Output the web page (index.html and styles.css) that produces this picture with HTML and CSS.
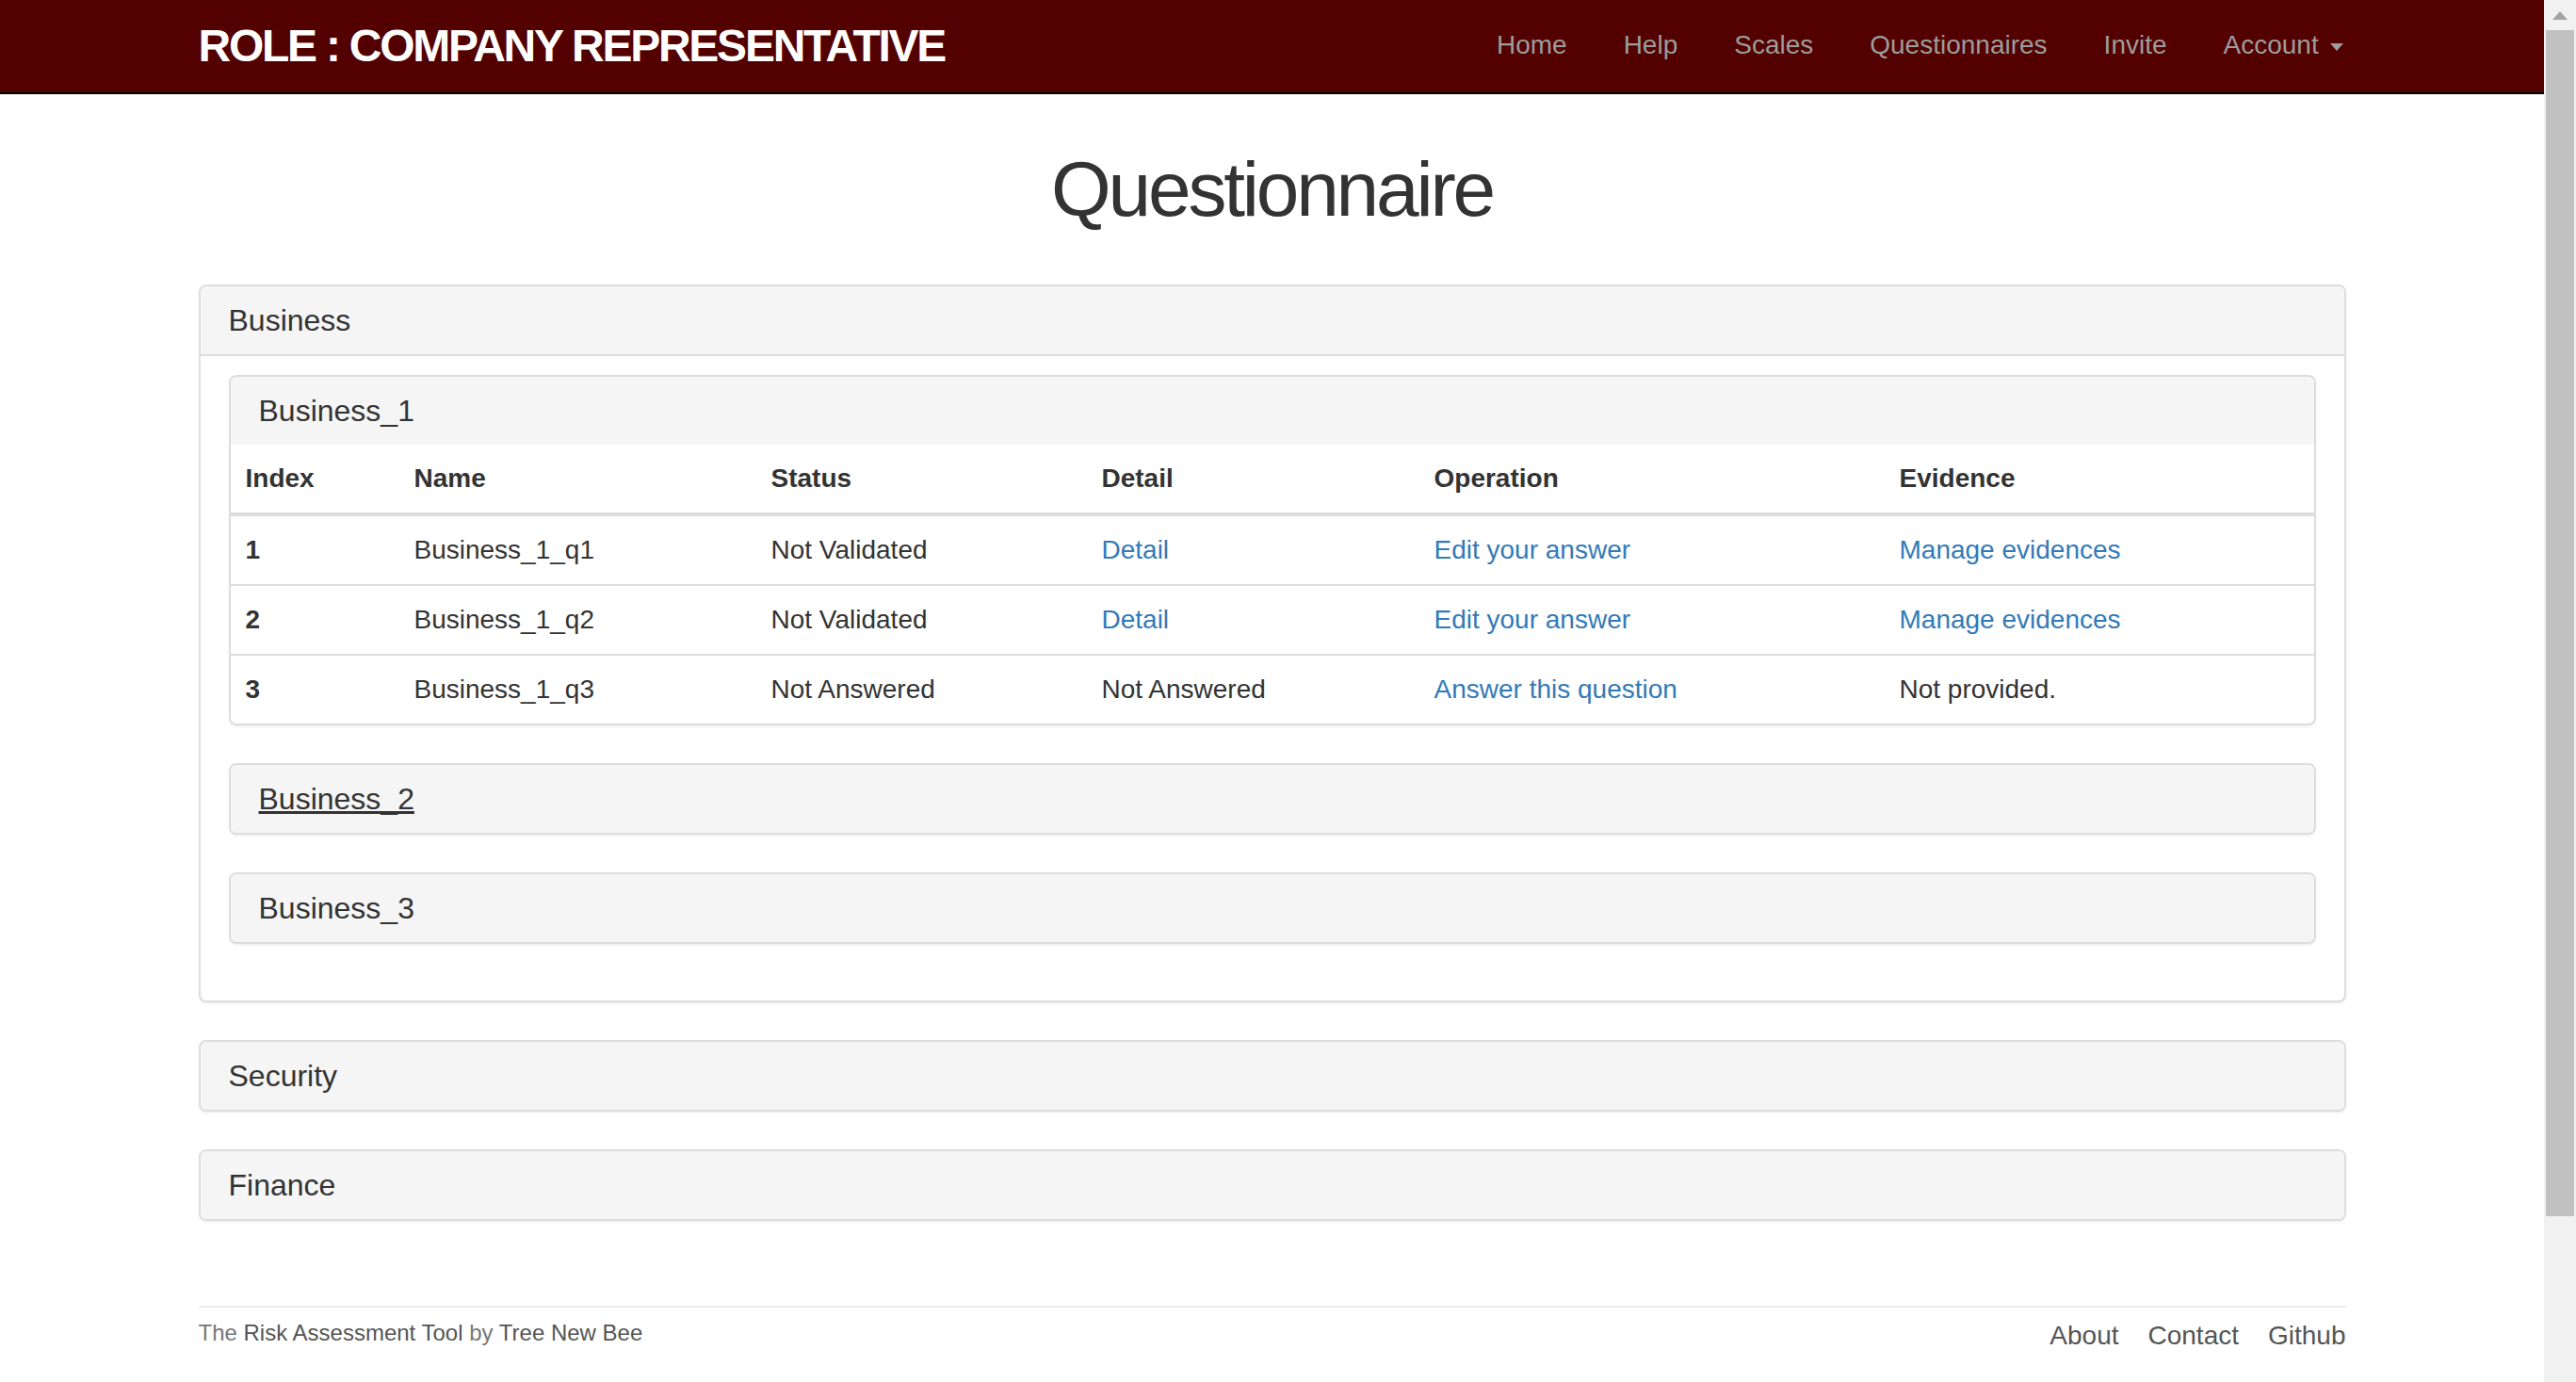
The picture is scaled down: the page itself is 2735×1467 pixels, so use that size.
FILE: index.html
```html
<!DOCTYPE html>
<html lang="en">
<head>
<meta charset="utf-8">
<title>Questionnaire</title>
<link rel="stylesheet" href="styles.css">
</head>
<body>
<div class="viewport">
  <div class="page">
    <nav class="navbar">
      <div class="container nav-inner">
        <a class="brand" href="#">ROLE : COMPANY REPRESENTATIVE</a>
        <ul class="nav">
          <li><a href="#">Home</a></li>
          <li><a href="#">Help</a></li>
          <li><a href="#">Scales</a></li>
          <li><a href="#">Questionnaires</a></li>
          <li><a href="#">Invite</a></li>
          <li><a href="#">Account <span class="caret"></span></a></li>
        </ul>
      </div>
    </nav>

    <main class="container main">
      <h1 class="title">Questionnaire</h1>

      <section class="panel">
        <div class="panel-heading open">Business</div>
        <div class="panel-body">
          <section class="panel">
            <div class="panel-heading">Business_1</div>
            <table class="table">
              <colgroup>
                <col class="c1"><col class="c2"><col class="c3"><col class="c4"><col class="c5"><col>
              </colgroup>
              <thead>
                <tr><th>Index</th><th>Name</th><th>Status</th><th>Detail</th><th>Operation</th><th>Evidence</th></tr>
              </thead>
              <tbody>
                <tr><th>1</th><td>Business_1_q1</td><td>Not Validated</td><td><a href="#">Detail</a></td><td><a href="#">Edit your answer</a></td><td><a href="#">Manage evidences</a></td></tr>
                <tr><th>2</th><td>Business_1_q2</td><td>Not Validated</td><td><a href="#">Detail</a></td><td><a href="#">Edit your answer</a></td><td><a href="#">Manage evidences</a></td></tr>
                <tr><th>3</th><td>Business_1_q3</td><td>Not Answered</td><td>Not Answered</td><td><a href="#">Answer this question</a></td><td>Not provided.</td></tr>
              </tbody>
            </table>
          </section>
          <section class="panel">
            <div class="panel-heading"><a class="heading-link hover" href="#">Business_2</a></div>
          </section>
          <section class="panel">
            <div class="panel-heading"><a class="heading-link" href="#">Business_3</a></div>
          </section>
        </div>
      </section>

      <section class="panel">
        <div class="panel-heading"><a class="heading-link" href="#">Security</a></div>
      </section>
      <section class="panel">
        <div class="panel-heading"><a class="heading-link" href="#">Finance</a></div>
      </section>
    </main>

    <footer class="container footer">
      <div class="footer-row">
        <p class="credit">The <a href="#">Risk Assessment Tool</a> by <a href="#">Tree New Bee</a></p>
        <ul class="footer-links">
          <li><a href="#">About</a></li>
          <li><a href="#">Contact</a></li>
          <li><a href="#">Github</a></li>
        </ul>
      </div>
    </footer>
  </div>

  <div class="scrollbar">
    <div class="sb-button"><span class="sb-arrow"></span></div>
    <div class="sb-thumb"></div>
  </div>
</div>
</body>
</html>
```

FILE: styles.css
```css
html, body {
  margin: 0;
  padding: 0;
  height: 100%;
}

body {
  font-family: "Liberation Sans", Arial, Helvetica, sans-serif;
  font-size: 28px;
  line-height: 40px;
  color: #333;
  background: #fff;
}

a {
  color: #337ab7;
  text-decoration: none;
}

.viewport {
  display: flex;
  height: 100vh;
  overflow: hidden;
}

.page {
  flex: 1 1 auto;
  min-width: 0;
}

.container {
  width: 2340px;
  box-sizing: border-box;
  padding: 0 30px;
  margin: 0 auto;
}

/* Navbar */
.navbar {
  background: #520000;
  height: 98px;
  border-bottom: 2px solid #000;
}

.nav-inner {
  display: flex;
  justify-content: space-between;
  align-items: flex-start;
  height: 98px;
}

.brand {
  display: block;
  padding-top: 25px;
  font-size: 48px;
  line-height: 48px;
  font-weight: bold;
  letter-spacing: -2.25px;
  color: #fff;
}

.nav {
  list-style: none;
  margin: 0 -27px 0 0;
  padding: 0;
  display: flex;
}

.nav a {
  display: block;
  padding: 28px 30px 30px;
  line-height: 40px;
  color: #9d9d9d;
}

.caret {
  display: inline-block;
  width: 0;
  height: 0;
  margin-left: 4px;
  vertical-align: middle;
  border-top: 8px solid #9d9d9d;
  border-left: 7px solid transparent;
  border-right: 7px solid transparent;
}

/* Main */
.main {
  display: flow-root;
  padding-top: 56px;
}

.title {
  margin: 0 0 56px;
  text-align: center;
  font-size: 82px;
  line-height: 90px;
  font-weight: normal;
  letter-spacing: -3.2px;
  color: #333;
}

.panel {
  border: 2px solid #ddd;
  border-radius: 8px;
  background: #fff;
  margin-bottom: 40px;
  box-shadow: 0 2px 2px rgba(0, 0, 0, 0.05);
  overflow: hidden;
}

.panel-heading {
  background: #f5f5f5;
  padding: 20px 30px;
  font-size: 32px;
  line-height: 32px;
  color: #333;
}

.panel-heading.open {
  border-bottom: 2px solid #ddd;
}

.heading-link {
  color: #333;
}

.heading-link.hover {
  text-decoration: underline;
}

.panel-body {
  padding: 20px 30px;
}

/* Table */
.table {
  width: 100%;
  table-layout: fixed;
  border-collapse: separate;
  border-spacing: 0;
}

.table col.c1 { width: 179px; }
.table col.c2 { width: 379px; }
.table col.c3 { width: 351px; }
.table col.c4 { width: 353px; }
.table col.c5 { width: 494px; }

.table th,
.table td {
  padding: 16px;
  line-height: 40px;
  text-align: left;
  vertical-align: top;
  white-space: nowrap;
}

.table th {
  font-weight: bold;
}

.table thead th {
  border-bottom: 4px solid #ddd;
}

.table tbody tr + tr > * {
  border-top: 2px solid #ddd;
}

/* Footer */
.footer {
  margin-top: 50px;
}

.footer-row {
  border-top: 2px solid #eee;
  padding-top: 10px;
  display: flex;
  justify-content: space-between;
  align-items: flex-start;
}

.credit {
  margin: 0;
  font-size: 24px;
  line-height: 34px;
  color: #777;
}

.credit a {
  color: #555;
}

.footer-links {
  list-style: none;
  margin: 0;
  padding: 0;
  display: flex;
  gap: 31px;
}

.footer-links a {
  color: #555;
  line-height: 40px;
}

/* Fake browser scrollbar */
.scrollbar {
  flex: 0 0 34px;
  background: #f1f1f1;
  display: flex;
  flex-direction: column;
  align-items: center;
}

.sb-button {
  height: 32px;
  width: 34px;
  display: flex;
  align-items: center;
  justify-content: center;
}

.sb-arrow {
  width: 0;
  height: 0;
  border-bottom: 9px solid #a3a3a3;
  border-left: 8px solid transparent;
  border-right: 8px solid transparent;
}

.sb-thumb {
  width: 30px;
  height: 1259px;
  background: #c1c1c1;
}
```
